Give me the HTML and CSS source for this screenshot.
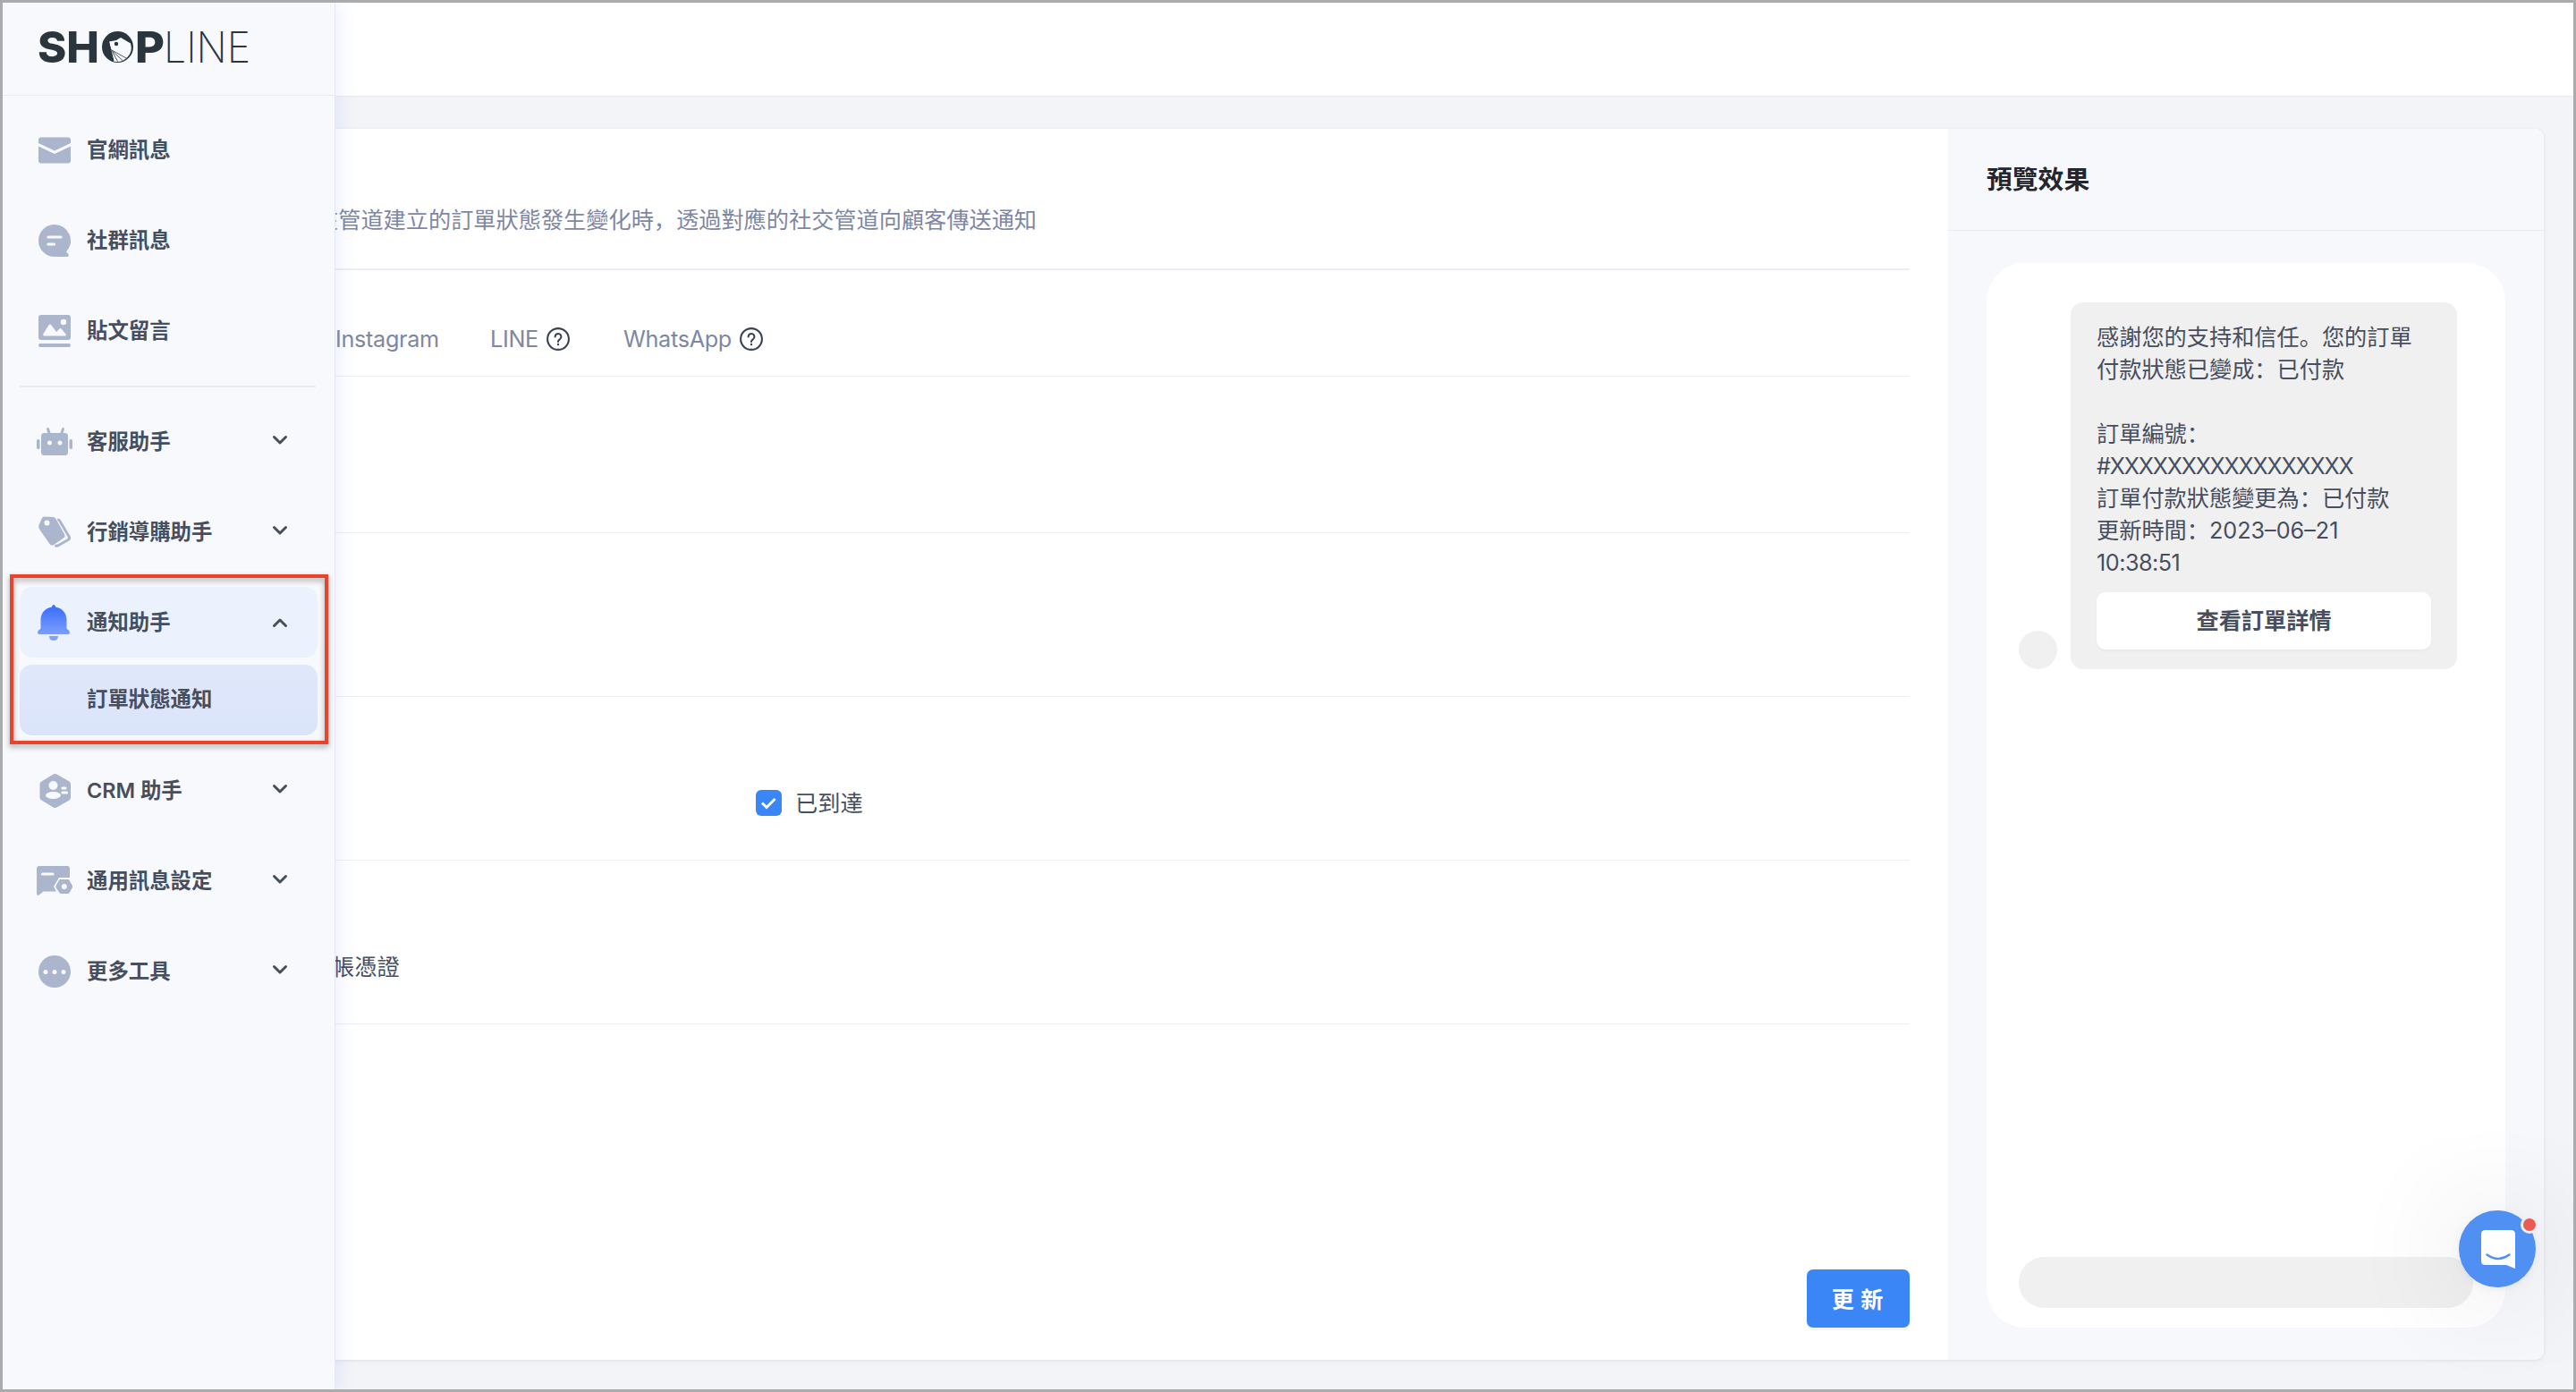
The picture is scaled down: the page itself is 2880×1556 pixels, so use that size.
FILE: index.html
```
<!DOCTYPE html>
<html lang="zh-Hans">
<head>
  <meta charset="utf-8">
  <title>SHOPLINE</title>
  <link rel="stylesheet" href="styles.css">
</head>
<body>
  <div class="app">
    <header class="topbar"></header>

    <div class="card">
      <main class="panel">
        <div class="desc">在管道建立的訂單狀態發生變化時，透過對應的社交管道向顧客傳送通知</div>
        <div class="tabs">
          <div class="tab tab-ig">Instagram</div>
          <div class="tab tab-line">LINE
            <svg class="help" viewBox="0 0 26 26"><circle cx="13" cy="13" r="11.9"/><path d="M9.6 10.4a3.4 3.4 0 1 1 5.2 2.9c-1.2.7-1.8 1.3-1.8 2.7"/><circle class="dot" cx="13" cy="19" r="1.2"/></svg>
          </div>
          <div class="tab tab-wa">WhatsApp
            <svg class="help" viewBox="0 0 26 26"><circle cx="13" cy="13" r="11.9"/><path d="M9.6 10.4a3.4 3.4 0 1 1 5.2 2.9c-1.2.7-1.8 1.3-1.8 2.7"/><circle class="dot" cx="13" cy="19" r="1.2"/></svg>
          </div>
        </div>
        <div class="row row-first"></div>
        <div class="row"></div>
        <div class="row">
          <label class="check">
            <span class="box"><svg viewBox="0 0 29 29"><path d="M7 14.500l5 5L21.500 10"/></svg></span>
            已到達
          </label>
        </div>
        <div class="row">
          <span class="voucher">帳憑證</span>
        </div>
        <div class="actions">
          <button class="update">更 新</button>
        </div>
      </main>

      <aside class="preview">
        <h2 class="preview-title">預覽效果</h2>
        <div class="phone">
          <div class="message">
            <div class="avatar"></div>
            <div class="bubble">
              <p>感謝您的支持和信任。您的訂單<br>付款狀態已變成：已付款</p>
              <p class="order">訂單編號：<br><span class="xs">#XXXXXXXXXXXXXXXXX</span><br>訂單付款狀態變更為：已付款<br>更新時間：2023–06–21<br><span class="time">10:38:51</span></p>
              <div class="detail-btn">查看訂單詳情</div>
            </div>
          </div>
          <div class="input"></div>
        </div>
      </aside>
    </div>

    <nav class="sidebar">
      <div class="brand">
        <svg class="logo" viewBox="-6 -12 252 64">
          <text class="logo-bold" x="-1" y="37" textLength="69" lengthAdjust="spacingAndGlyphs">SH</text>
          <circle cx="88.500" cy="19.500" r="17.500"/>
          <path class="face" d="M79 13.500l8-1.500 5-3 11 6.500a15.800 15.800 0 0 1-19 20z"/>
          <circle cx="87" cy="16" r="2.200"/>
          <path class="beak" d="M81 22.500l18 10M82 23.500l12 11M82.500 24.500l6 11"/>
          <path d="M79 13.500l2.500 10 3 11.500-7-3-5-10z"/>
          <text class="logo-bold" x="108" y="37" textLength="33" lengthAdjust="spacingAndGlyphs">P</text>
          <text class="logo-thin" x="140" y="37" textLength="97" lengthAdjust="spacingAndGlyphs">LINE</text>
        </svg>
      </div>

      <div class="menu">
        <div class="item">
          <svg class="icon" viewBox="0 0 40 40"><path d="M5 5.500h30a3 3 0 0 1 3 3V12L20 20.500 2 12V8.500a3 3 0 0 1 3-3z"/><path d="M2 15.500l18 8.500 18-8.500v16a3 3 0 0 1-3 3H5a3 3 0 0 1-3-3z"/></svg>
          <span class="label">官網訊息</span>
        </div>
        <div class="item">
          <svg class="icon" viewBox="0 0 40 40"><path d="M20 2a18 18 0 0 1 13 30.500l2.500 2.500v3H20a18 18 0 0 1 0-36z"/><path class="cut-line" d="M13 16h14M13 24h6.500"/></svg>
          <span class="label">社群訊息</span>
        </div>
        <div class="item">
          <svg class="icon" viewBox="0 0 40 40"><rect x="2" y="2" width="36" height="28" rx="3"/><rect x="2" y="34" width="36" height="4" rx="2"/><circle class="cut" cx="30" cy="10" r="3.200"/><path class="cut" d="M7.500 23l6-9.500q1.500-2 3 0l5.500 7.500 3.500-3.500q1.500-1 2.500.500l4.500 5.500q1 2-1 2H9q-2.500 0-1.500-2z"/></svg>
          <span class="label">貼文留言</span>
        </div>
        <div class="divider"></div>
        <div class="item">
          <svg class="icon" viewBox="0 0 40 40"><path class="line" d="M12.500 5.500l2 6M29.500 5.500l-2 6"/><rect x="5" y="10" width="30" height="25" rx="3.500"/><rect x="0" y="17" width="3.500" height="11" rx="1.500"/><rect x="36.500" y="17" width="3.500" height="11" rx="1.500"/><circle class="cut" cx="14.500" cy="21" r="2.500"/><circle class="cut" cx="26" cy="21" r="2.500"/></svg>
          <span class="label">客服助手</span>
          <svg class="chevron" viewBox="0 0 16 10"><path d="M1.500 1.500L8 8l6.500-6.500"/></svg>
        </div>
        <div class="item">
          <svg class="icon" viewBox="0 0 40 40"><path d="M8.500 2.500l10 .500q2 .200 3 2l9.500 17q1.500 3-1 4.500L19 34q-2.500 1.500-4.500-1L3 16.500Q1.500 14.500 2.500 12L6 4q.700-1.500 2.500-1.500z"/><circle class="cut" cx="11.500" cy="9.500" r="3"/><path class="thin" d="M24.500 6q1 .500 2 2.500L36 24.500q1.500 2.500-1 4L24.500 34.500q-1.500 1-3 .500"/></svg>
          <span class="label">行銷導購助手</span>
          <svg class="chevron" viewBox="0 0 16 10"><path d="M1.500 1.500L8 8l6.500-6.500"/></svg>
        </div>
        <div class="item open">
          <svg class="icon" viewBox="0 0 40 40">
            <defs><linearGradient id="bell" x1="0" y1="0" x2="0" y2="1"><stop offset="0" stop-color="#366cfb"/><stop offset="1" stop-color="#7c9efb"/></linearGradient></defs>
            <path class="bell" d="M17 2.500Q17 0 19 0t2 2.500C29 4 33.500 9.500 33.500 17v9q0 1 1 1.500 2.500 1 2.500 3.500 0 2-2 2H3q-2 0-2-2 0-2.500 2.500-3.500 1-.500 1-1.500v-9C4.500 9.500 9 4 17 2.500z"/>
            <path fill="#7fa2fc" d="M14 35h10q0 5-5 5t-5-5z"/>
          </svg>
          <span class="label">通知助手</span>
          <svg class="chevron up" viewBox="0 0 16 10"><path d="M1.500 1.500L8 8l6.500-6.500"/></svg>
        </div>
        <div class="sub-item">訂單狀態通知</div>
        <div class="item">
          <svg class="icon" viewBox="0 0 40 40"><path d="M18.500 1.500q2-1 4 0l14 8Q38 10.500 38 12.500v15q0 2-1.500 3l-14 8q-2 1-4 0l-13-8q-2-1-2-3v-15q0-2 2-3z"/><circle class="cut" cx="18.500" cy="14" r="5"/><ellipse class="cut" cx="18.500" cy="25" rx="8.500" ry="4"/><path class="cut-line thin-cut" d="M29 17h3M29 22h4.500"/></svg>
          <span class="label"><span class="crm">CRM</span> 助手</span>
          <svg class="chevron" viewBox="0 0 16 10"><path d="M1.500 1.500L8 8l6.500-6.500"/></svg>
        </div>
        <div class="item">
          <svg class="icon" viewBox="0 0 40 40"><path d="M3 3h31q3 0 3 3v10H25l-6 10 3 5.500H7.500L2 36q-2 0-2-2V6q0-3 3-3z"/><path class="cut-line" d="M6.500 12h11.500"/><path d="M26 18h9q1 0 1.500 1l3.500 6q.500 1 0 2l-3.500 6q-.500 1-1.500 1h-8q-1 0-1.500-1L21.500 27q-.500-1 0-2l3.500-6q.300-1 1-1z"/><circle class="cut" cx="30.800" cy="26" r="3"/></svg>
          <span class="label">通用訊息設定</span>
          <svg class="chevron" viewBox="0 0 16 10"><path d="M1.500 1.500L8 8l6.500-6.500"/></svg>
        </div>
        <div class="item">
          <svg class="icon" viewBox="0 0 40 40"><circle cx="20" cy="20" r="18"/><circle class="cut" cx="10" cy="20.500" r="2.500"/><circle class="cut" cx="20" cy="20.500" r="2.500"/><circle class="cut" cx="30" cy="20.500" r="2.500"/></svg>
          <span class="label">更多工具</span>
          <svg class="chevron" viewBox="0 0 16 10"><path d="M1.500 1.500L8 8l6.500-6.500"/></svg>
        </div>
      </div>
    </nav>

    <div class="highlight"></div>

    <div class="chat">
      <svg viewBox="0 0 38 43"><path fill="#fff" d="M4.500 0h29Q38 0 38 4.500V43l-10-4H4.500Q0 39 0 34.500v-30Q0 0 4.500 0z"/><path class="smile" d="M6.500 27.500q12.500 9 25 0"/></svg>
      <span class="badge"></span>
    </div>
  </div>
</body>
</html>
```

FILE: styles.css
```
* {
  box-sizing: border-box;
}

body {
  margin: 0;
  font-family: Inter, 'Noto Sans CJK SC', 'Noto Sans CJK TC', sans-serif;
  font-size: 25.2px;
  color: #474e5e;
}

.app {
  position: relative;
  display: flex;
  flex-direction: column;
  width: 2880px;
  height: 1556px;
  border: 3px solid #a9abad;
  background: #f3f4f8;
  overflow: hidden;
}

.topbar {
  height: 105px;
  background: #fff;
  border-bottom: 1px solid #e8eaf0;
}

.card {
  flex: 1;
  display: flex;
  margin: 36px 33px 33px 0;
  border-radius: 10px;
  background: #fff;
  box-shadow: 0 1px 4px rgba(60, 70, 110, 0.12);
}

/* main panel */
.panel {
  flex: 1;
  display: flex;
  flex-direction: column;
  padding: 0 43px 36px 350px;
}

.desc {
  height: 158px;
  padding-top: 84px;
  line-height: 36px;
  color: #7e87a3;
  border-bottom: 2px solid #eceef6;
  white-space: nowrap;
}

.tabs {
  display: flex;
  height: 119px;
  padding: 59px 0 0 22px;
  line-height: 36px;
  color: #7e87a3;
  border-bottom: 1px solid #eceef6;
}

.tab {
  display: flex;
  align-items: center;
  height: 36px;
  letter-spacing: -0.3px;
  white-space: nowrap;
}

.tab-ig {
  width: 173px;
}

.tab-line {
  width: 149px;
}

.help {
  width: 26px;
  height: 26px;
  margin-left: 9px;
  fill: none;
  stroke: #3a4256;
  stroke-width: 2.1;
  stroke-linecap: round;
}

.help .dot {
  fill: #3a4256;
  stroke: none;
}

.row {
  height: 183px;
  padding: 101px 0 0 18px;
  border-bottom: 1px solid #eceef6;
  line-height: 36px;
}

.row-first {
  height: 175px;
}

.check {
  display: flex;
  align-items: center;
  gap: 15px;
  margin-left: 474px;
}

.box {
  width: 29px;
  height: 29px;
  margin-bottom: 1px;
  border-radius: 6px;
  background: #3b86f7;
}

.box svg {
  display: block;
  fill: none;
  stroke: #fff;
  stroke-width: 3;
}

.actions {
  display: flex;
  justify-content: flex-end;
  margin-top: auto;
}

.update {
  width: 115px;
  height: 65px;
  padding: 0 2px 2px 0;
  border: none;
  border-radius: 7px;
  background: #3b86f7;
  color: #fff;
  font: inherit;
  font-weight: 600;
  word-spacing: 1px;
  box-shadow: 0 3px 0 rgba(0, 0, 0, 0.04);
}

/* preview */
.preview {
  display: flex;
  flex-direction: column;
  width: 666px;
  background: #f7f8fc;
  border-radius: 0 10px 10px 0;
}

.preview-title {
  height: 114px;
  margin: 0;
  padding: 36px 43px 0;
  font-size: 28.8px;
  line-height: 42px;
  font-weight: 600;
  color: #23262f;
  border-bottom: 1px solid #e9ebf1;
}

.phone {
  flex: 1;
  display: flex;
  flex-direction: column;
  justify-content: space-between;
  margin: 36px 43px;
  padding: 44px 36px 22px;
  border-radius: 43px;
  background: #fff;
}

.message {
  display: flex;
  align-items: flex-end;
  gap: 15px;
}

.avatar {
  width: 43px;
  height: 43px;
  border-radius: 50%;
  background: #f0f0f0;
}

.bubble {
  width: 432px;
  height: 410px;
  padding: 21px 29px;
  border-radius: 14px;
  background: #f0f0f0;
  line-height: 36px;
  white-space: nowrap;
}

.bubble p {
  height: 72px;
  margin: 0;
}

.bubble .order {
  height: 180px;
  margin: 36px 0 15px;
}

.xs {
  letter-spacing: -1.2px;
}

.time {
  letter-spacing: -0.5px;
}

.detail-btn {
  height: 64px;
  border-radius: 10px;
  background: #fff;
  line-height: 64px;
  font-weight: 600;
  text-align: center;
  box-shadow: 0 2px 3px rgba(0, 0, 0, 0.03);
}

.input {
  width: 508px;
  height: 57px;
  border-radius: 29px;
  background: #f0f0f0;
}

/* sidebar lies over the page */
.sidebar {
  position: absolute;
  top: 0;
  left: 0;
  width: 372px;
  height: 100%;
  background: #f7f9fd;
  border-right: 1px solid #e6e9f3;
  box-shadow: 0 0 22px rgba(90, 125, 245, 0.16);
}

.brand {
  height: 104px;
  padding: 18px 0 0 34px;
  border-bottom: 1px solid #e8eaf0;
}

.logo {
  display: block;
  width: 252px;
  height: 64px;
  fill: #2b353d;
}

.logo text {
  font-family: Inter, sans-serif;
  font-size: 48px;
}

.logo-bold {
  font-weight: 800;
}

.logo-thin {
  font-weight: 200;
}

.logo .face {
  fill: #f7f9fd;
}

.logo .beak {
  fill: none;
  stroke: #2b353d;
  stroke-width: 0.8;
}

.menu {
  display: flex;
  flex-direction: column;
  gap: 22px;
  padding: 21px 19px 0 19px;
  font-size: 23.4px;
  font-weight: 600;
}

.item {
  display: flex;
  align-items: center;
  height: 79px;
  padding: 0 34px 0 19px;
  border-radius: 14px;
}

.item.open {
  background: #ebf2fd;
}

.icon {
  width: 40px;
  height: 40px;
  margin-right: 16px;
  fill: #abb6cc;
}

.icon .cut {
  fill: #f7f9fd;
}

.icon .cut-line {
  fill: none;
  stroke: #f7f9fd;
  stroke-width: 3.2;
  stroke-linecap: round;
}

.icon .line,
.icon .thin {
  fill: none;
  stroke: #abb6cc;
  stroke-width: 3;
  stroke-linecap: round;
}

.icon .bell {
  fill: url(#bell);
}

.label {
  padding-bottom: 3px;
}

.chevron {
  width: 16px;
  height: 10px;
  margin: 0 0 4px auto;
  fill: none;
  stroke: #474e5e;
  stroke-width: 3;
  stroke-linecap: round;
  stroke-linejoin: round;
  overflow: visible;
}

.chevron.up {
  margin-bottom: 0;
  transform: rotate(180deg);
}

.divider {
  height: 2px;
  margin: 0 2px -1px 0;
  background: #eaecf1;
}

.sub-item {
  height: 79px;
  margin-top: -14px;
  padding-left: 75px;
  border-radius: 14px;
  background: linear-gradient(#e0e8fb, #dae4f9);
  line-height: 77px;
}

/* red frame around the open group */
.highlight {
  position: absolute;
  left: 8px;
  top: 639px;
  width: 356px;
  height: 190px;
  border: 4px solid #e9432b;
  filter: drop-shadow(0 3px 3px rgba(0, 0, 0, 0.35));
}

.chat {
  position: absolute;
  left: 2746px;
  top: 1350px;
  width: 86px;
  height: 86px;
  border-radius: 50%;
  background: #5190f3;
  box-shadow: 0 2px 12px rgba(0, 0, 0, 0.06), 0 4px 130px rgba(0, 0, 0, 0.16);
}

.chat svg {
  display: block;
  width: 38px;
  height: 43px;
  margin: 22px 0 0 24.5px;
}

.smile {
  fill: none;
  stroke: #5190f3;
  stroke-width: 2.4;
  stroke-linecap: round;
}

.badge {
  position: absolute;
  top: 6px;
  right: -3px;
  width: 20px;
  height: 20px;
  border: 3px solid #eeeff3;
  border-radius: 50%;
  background: #ec5b53;
}
```
